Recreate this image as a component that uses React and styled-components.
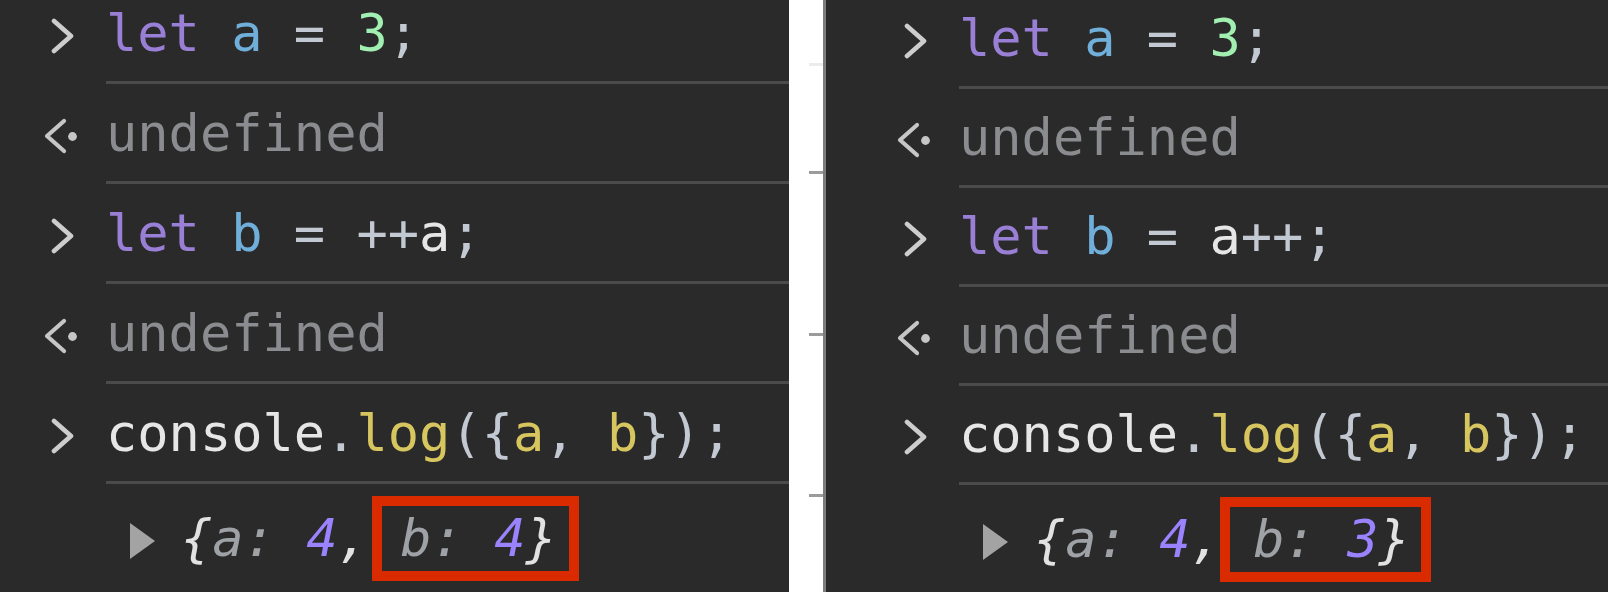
import React from 'react';
import styled, { createGlobalStyle } from 'styled-components';

const Global = createGlobalStyle`
  html, body { margin: 0; padding: 0; background: #ffffff; }
  body {
    width: 1608px; height: 592px; overflow: hidden;
    font-family: "DejaVu Sans Mono", "Liberation Mono", monospace;
  }
`;

const Stage = styled.div`
  display: flex;
  width: 1608px;
  height: 592px;
`;

const Panel = styled.section`
  flex: none;
  box-sizing: border-box;
  width: ${p => p.$width}px;
  height: 592px;
  background: #2a2a2a;
  display: flex;
  flex-direction: column;
  padding-left: ${p => p.$indent}px;
  border-left: ${p => (p.$bordered ? '3px solid #7d7d7d' : 'none')};
  overflow: hidden;
`;

const Gap = styled.div`
  flex: none;
  width: 34px;
  height: 592px;
  background: #ffffff;
  display: flex;
  flex-direction: column;
  align-items: flex-end;
`;

const Tick = styled.div`
  width: 14px;
  height: 3px;
  margin-top: ${p => p.$mt}px;
  background: ${p => (p.$light ? '#ececec' : '#9b9b9b')};
`;

const Row = styled.div`
  display: flex;
  flex: none;
  padding-top: ${p => p.$pt}px;
`;

const Gutter = styled.div`
  flex: none;
  width: 62px;
  height: 60px;
  box-sizing: border-box;
  padding-top: 6px;
  display: flex;
  align-items: center;
`;

const Line = styled.div`
  flex: 1;
  font-size: 52px;
  line-height: 60px;
  white-space: pre;
  padding-bottom: 18px;
  border-bottom: 3px solid #4b4b4b;
  color: #e4e4e4;
`;

const ObjLine = styled.div`
  flex: 1;
  display: flex;
  align-items: flex-start;
  font-size: 52px;
  line-height: 60px;
  white-space: pre;
  padding-left: ${p => p.$pl}px;
`;

const Caret = styled.div`
  flex: none;
  height: 60px;
  width: ${p => p.$w}px;
  box-sizing: border-box;
  padding-top: 6px;
  display: flex;
  align-items: center;
`;

const COLORS = {
  kw: '#9a7fd6',
  def: '#71afdb',
  num: '#a2efb2',
  punc: '#c3c9d2',
  var: '#e6e6e6',
  prop: '#d7c55f',
  undef: '#8a8c8f',
};

const Tok = styled.span`
  color: ${p => COLORS[p.$k]};
`;

const Preview = styled.span`
  font-style: italic;
  color: #e2e2e2;
`;

const Key = styled.span`
  color: #9ea1a5;
`;

const ONum = styled.span`
  color: #9b82ff;
`;

const Marked = styled.span`
  position: relative;
  display: inline-block;
  &::after {
    content: '';
    position: absolute;
    top: -12px;
    bottom: -13px;
    left: ${p => p.$l}px;
    right: ${p => p.$r}px;
    border: 10px solid #d92a00;
  }
`;

const InputIcon = () => (
  <svg width="24" height="36" viewBox="0 0 24 36" style={{ marginLeft: 7 }}>
    <polyline points="3,3 20,18 3,33" fill="none" stroke="#cdcdcd" strokeWidth="4.6" strokeLinecap="round" strokeLinejoin="round" />
  </svg>
);

const ResultIcon = () => (
  <svg width="34" height="36" viewBox="0 0 34 36">
    <polyline points="20,3 3,18 20,33" fill="none" stroke="#c6c6c6" strokeWidth="4.2" strokeLinecap="round" strokeLinejoin="round" />
    <circle cx="28.5" cy="18.5" r="4.4" fill="#c6c6c6" />
  </svg>
);

const ExpandIcon = () => (
  <svg width="25" height="36" viewBox="0 0 25 36">
    <polygon points="0,0 25,18 0,36" fill="#a3a3a3" />
  </svg>
);

const InputRow = ({ pt, children }) => (
  <Row $pt={pt}>
    <Gutter><InputIcon /></Gutter>
    <Line>{children}</Line>
  </Row>
);

const ResultRow = ({ pt }) => (
  <Row $pt={pt}>
    <Gutter><ResultIcon /></Gutter>
    <Line><Tok $k="undef">undefined</Tok></Line>
  </Row>
);

const ObjectRow = ({ pt, b, boxL, boxR }) => (
  <Row $pt={pt}>
    <Gutter />
    <ObjLine $pl={24}>
      <Caret $w={51}><ExpandIcon /></Caret>
      <Preview>
        {'{'}<Key>a</Key><Key>:</Key> <ONum>4</ONum>, <Marked $l={boxL} $r={boxR}><Key>b</Key><Key>:</Key> <ONum>{b}</ONum>{'}'}</Marked>
      </Preview>
    </ObjLine>
  </Row>
);

const Console = ({ op, b, first, step, boxL, boxR }) => (
  <>
    <InputRow pt={first}>
      <Tok $k="kw">let</Tok> <Tok $k="def">a</Tok> <Tok $k="punc">=</Tok> <Tok $k="num">3</Tok><Tok $k="punc">;</Tok>
    </InputRow>
    <ResultRow pt={step} />
    <InputRow pt={step}>
      <Tok $k="kw">let</Tok> <Tok $k="def">b</Tok> <Tok $k="punc">=</Tok>{' '}
      {op === 'pre' ? (
        <><Tok $k="punc">++</Tok><Tok $k="var">a</Tok></>
      ) : (
        <><Tok $k="var">a</Tok><Tok $k="punc">++</Tok></>
      )}
      <Tok $k="punc">;</Tok>
    </InputRow>
    <ResultRow pt={step} />
    <InputRow pt={step}>
      <Tok $k="var">console</Tok><Tok $k="punc">.</Tok><Tok $k="prop">log</Tok><Tok $k="punc">({'{'}</Tok><Tok $k="prop">a</Tok><Tok $k="punc">,</Tok> <Tok $k="prop">b</Tok><Tok $k="punc">{'}'});</Tok>
    </InputRow>
    <ObjectRow pt={24} b={b} boxL={boxL} boxR={boxR} />
  </>
);

export default function App() {
  return (
    <>
      <Global />
      <Stage>
        <Panel $width={789} $indent={44}>
          <Console op="pre" b="4" first={3} step={19} boxL={-28} boxR={-22} />
        </Panel>
        <Gap>
          <Tick $mt={63} $light />
          <Tick $mt={105} />
          <Tick $mt={159} />
          <Tick $mt={158} />
        </Gap>
        <Panel $width={785} $indent={71} $bordered>
          <Console op="post" b="3" first={8} step={18} boxL={-33} boxR={-21} />
        </Panel>
      </Stage>
    </>
  );
}
